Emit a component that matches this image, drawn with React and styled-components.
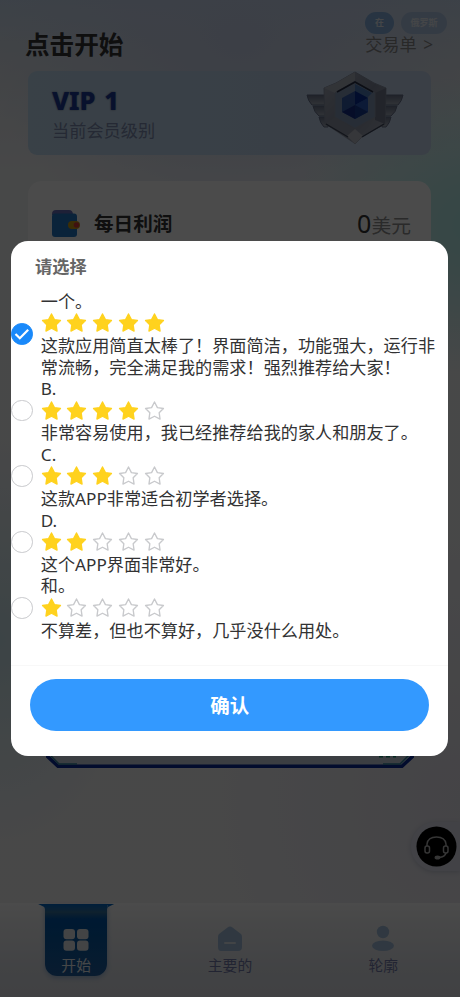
import React, { useState } from 'react';
import styled, { createGlobalStyle } from 'styled-components';

const GlobalStyle = createGlobalStyle`
  * {
    box-sizing: border-box;
  }
  body {
    margin: 0;
    font-family: 'Noto Sans', 'Noto Sans CJK SC', sans-serif;
  }
  h1, h2, p {
    margin: 0;
  }
  button {
    border: 0;
    padding: 0;
    background: none;
    font-family: inherit;
  }
`;

const Page = styled.div`
  position: relative;
  height: 997px;
  overflow: hidden;
  display: flex;
  flex-direction: column;
  background: radial-gradient(
      ellipse 190px 150px at 480px 225px,
      #b0eeea 0%,
      rgba(176, 238, 234, 0.75) 35%,
      rgba(176, 238, 234, 0) 100%
    ),
    radial-gradient(
      ellipse 260px 200px at 240px 40px,
      #c9d3ec 0%,
      rgba(201, 211, 236, 0) 100%
    ),
    radial-gradient(
      ellipse 130px 200px at 0 640px,
      #c9e3ea 0%,
      rgba(201, 227, 234, 0) 100%
    ),
    radial-gradient(
      ellipse 240px 260px at 460px 800px,
      #e5e3ec 0%,
      rgba(229, 227, 236, 0) 100%
    ),
    linear-gradient(#cadcf0 0, #dde3ea 60px, #eff0f2 170px, #f0f0f2 100%);
`;

const Languages = styled.div`
  position: absolute;
  top: 12px;
  right: 13px;
  display: flex;
  gap: 7px;
`;

const Language = styled.button`
  width: ${({ $active }) => ($active ? 29 : 46)}px;
  height: 22px;
  border-radius: 11px;
  background: ${({ $active }) => ($active ? '#86afdc' : '#b0c6e4')};
  color: #e4e9f0;
  font-size: 9px;
  font-weight: 600;
  line-height: 22px;
`;

const Header = styled.header`
  display: flex;
  align-items: center;
  justify-content: space-between;
  height: 71px;
  padding: 18px 27px 0 25px;

  h1 {
    color: #333;
    font-size: 24.6px;
    line-height: 36px;
  }
  p {
    margin-top: -2px;
    color: #888;
    font-size: 17.2px;
    word-spacing: 2px;
  }
`;

const VipCard = styled.section`
  display: flex;
  justify-content: space-between;
  height: 84px;
  margin: 0 29px 0 28px;
  padding-left: 24px;
  border-radius: 9px;
  background: linear-gradient(90deg, #c0d9ef, #c0d4ec 60%, #c3d2ea);

  h2 {
    height: 41px;
    padding-top: 11px;
    color: #1c3b98;
    font-size: 25.5px;
    font-weight: 800;
    line-height: 36px;
    word-spacing: 2px;
    text-shadow: 0 0 2px #5d6a82;
  }
  p {
    padding-top: 7px;
    color: #7c8bad;
    font-size: 17.2px;
    line-height: 24px;
  }
  svg {
    margin-right: 25px;
  }
`;

const ProfitCard = styled.section`
  display: flex;
  height: 500px;
  margin: 26px 29px 0 28px;
  padding: 29px 20px 0 24px;
  align-items: flex-start;
  border-radius: 14px;
  background: #fcfcfc;

  h2 {
    margin-left: 13px;
    color: #333;
    font-size: 19.6px;
    line-height: 28px;
  }
`;

const Amount = styled.p`
  margin-left: auto;
  margin-top: -5px;
  color: #333;
  font-size: 25px;
  line-height: 36px;

  span {
    color: #8c8c8c;
    font-size: 19.8px;
  }
`;

const Frame = styled.svg`
  display: block;
  margin: 59px auto 0 46px;
`;

const TabBar = styled.nav`
  display: grid;
  grid-template-columns: repeat(3, 1fr);
  align-items: start;
  height: 94px;
  margin-top: auto;
  background: linear-gradient(#fbfbfb, #eff0f1 20%, #dcdfe5 70%, #d8dae1);
`;

const Tab = styled.button`
  display: flex;
  flex-direction: column;
  align-items: center;
  padding-top: 21px;
  color: #737ba8;
  font-size: 14.8px;
  line-height: 20px;

  svg {
    margin-bottom: 1px;
  }
`;

const ActiveTab = styled(Tab)`
  position: relative;
  justify-self: center;
  width: 62px;
  height: 72px;
  margin: 1px 1px 0 0;
  padding-top: 20px;
  border-radius: 0 0 12px 12px;
  background: linear-gradient(
    #0067c4 0,
    #246da8 6px,
    #357099 8px,
    #0055a8 15px,
    #0858a0 50%,
    #205e9f 100%
  );
  box-shadow: 0 2px 5px #9ab4d3;
  color: #e8edf2;

  /* flared top edge */
  &::before {
    content: '';
    position: absolute;
    top: 0;
    left: -7px;
    width: 76px;
    height: 5px;
    background: #0067c4;
    clip-path: polygon(0 0, 100% 0, 92% 60%, 91% 100%, 91% 20%, 9% 20%, 9% 100%, 8% 60%);
  }
`;

const Support = styled.button`
  position: absolute;
  top: 822px;
  right: 0;
  width: 49px;
  height: 49px;
  padding: 4px 3px 4px 5px;
  border-radius: 25px 0 0 25px;
  background: #dcdeeb;
  box-shadow: 0 1px 5px #bfc2cf;
`;

const Overlay = styled.div`
  position: absolute;
  inset: 0;
  padding: 241px 12px 0 11px;
  background: rgba(0, 0, 0, 0.7);
`;

const Dialog = styled.div`
  height: 515px;
  border-radius: 17px;
  background: #fff;

  h2 {
    height: 49.8px;
    padding: 13px 24px 0;
    color: #666;
    font-size: 17.2px;
    line-height: 25px;
  }
`;

const Options = styled.div`
  height: 375px;
  border-bottom: 1px solid #f8f8f8;
`;

const Option = styled.label`
  display: flex;
  align-items: center;
  color: #323233;
  font-size: 17.15px;
  line-height: 21.4px;

  input {
    display: none;
  }
`;

const Radio = styled.span`
  flex: none;
  display: flex;
  align-items: center;
  justify-content: center;
  width: 21.5px;
  height: 21.5px;
  margin: -1px 8px 0 0.3px;
  border: 1px solid ${({ $checked }) => ($checked ? '#1989fa' : '#c8c9cc')};
  border-radius: 50%;
  background: ${({ $checked }) => ($checked ? '#1989fa' : '#fff')};
`;

const Stars = styled.div`
  display: flex;
  align-items: center;
  gap: 4.3px;
  height: 23px;
  padding-bottom: 1.4px;
`;

const Confirm = styled.button`
  display: block;
  width: 399px;
  height: 51.5px;
  margin: 13.7px 0 0 19.3px;
  padding-bottom: 2px;
  border-radius: 26px;
  background: #39f;
  color: #fff;
  font-size: 19.5px;
  font-weight: 700;
`;

const options = [
  {
    label: '一个。',
    stars: 5,
    text: '这款应用简直太棒了！界面简洁，功能强大，运行非常流畅，完全满足我的需求！强烈推荐给大家！',
  },
  { label: 'B.', stars: 4, text: '非常容易使用，我已经推荐给我的家人和朋友了。' },
  { label: 'C.', stars: 3, text: '这款APP非常适合初学者选择。' },
  { label: 'D.', stars: 2, text: '这个APP界面非常好。' },
  { label: '和。', stars: 1, text: '不算差，但也不算好，几乎没什么用处。' },
];

const Star = ({ filled }) => (
  <svg width='21.4' height='21.4' viewBox='0 0 22 22'>
    <path
      d='M10.8 2 13.8 7.8 20 8.7 15.6 13.1 16.5 19.6 10.8 16.7 5.1 19.6 6 13.1 1.6 8.7 7.8 7.8Z'
      fill={filled ? '#ffd21e' : '#fff'}
      stroke={filled ? '#ffd21e' : '#c8c9cc'}
      strokeWidth='1.4'
      strokeLinejoin='round'
    />
  </svg>
);

const Badge = () => (
  <svg width='102' height='80' viewBox='0 0 102 80'>
    <defs>
      <linearGradient id='metal' x1='0' y1='0' x2='1' y2='1'>
        <stop offset='0' stopColor='#a5aab8' />
        <stop offset='0.5' stopColor='#81889b' />
        <stop offset='1' stopColor='#a6abb9' />
      </linearGradient>
      <linearGradient id='wing' x1='0' y1='0' x2='0' y2='1'>
        <stop offset='0' stopColor='#697389' />
        <stop offset='1' stopColor='#a5acba' />
      </linearGradient>
    </defs>
    <g fill='url(#wing)' stroke='#66708a' strokeWidth='1'>
      <path d='M3 24H23V34H8Q4 30 3 24Z' />
      <path d='M9 35H23V45H15Q10 41 9 35Z' />
      <path d='M15 46H24V56H20Q16 52 15 46Z' />
      <path d='M99 24H79V34H94Q98 30 99 24Z' />
      <path d='M93 35H79V45H87Q92 41 93 35Z' />
      <path d='M87 46H78V56H82Q86 52 87 46Z' />
    </g>
    <path
      d='M51 1 70 12 82 17 81 53 59 65 51 73 43 65 21 53 20 17 32 12Z'
      fill='url(#metal)'
      stroke='#8790a2'
    />
    <path d='M51 1V11L31 22 20 17 32 12Z' fill='#a8adba' />
    <path d='M82 17 71 22V49L81 53Z' fill='#747b8e' />
    <path d='M51 58V73L21 53 31 46Z' fill='#8e94a3' />
    <path d='M51 58 43 65 51 73 59 65Z' fill='#b4b8c1' />
    <path d='M51 10 71 22V46L51 57 31 46V22Z' fill='#8498b6' stroke='#8c96aa' />
    <path d='M33 21 51 11 69 21' fill='none' stroke='#272e43' strokeWidth='1.7' />
    <path d='M22 53 44 66M58 66 80 53' stroke='#3d465b' strokeWidth='1.4' />
    <path d='M51 13 68 22 63 27 51 20Z' fill='#4d78b5' />
    <path d='M51 20 64 27V41L51 48 38 41V27Z' fill='#375da8' />
    <path d='M51 20 64 27 51 34Z' fill='#072d98' />
    <path d='M51 34 38 41V27Z' fill='#345ca6' />
    <path d='M64 27V41L51 34Z' fill='#2857b9' />
    <path d='M51 34V48L38 41Z' fill='#172d85' />
    <path d='M51 34 64 41 51 48Z' fill='#17398f' />
  </svg>
);

const Wallet = () => (
  <svg width='29' height='28' viewBox='0 0 29 28'>
    <path d='M0 4Q0 0 4 0H17Q21 0 21 5H0Z' fill='#656db7' />
    <rect y='3.5' width='25' height='23.5' rx='3' fill='#2476c2' />
    <rect x='16' y='11' width='12' height='8' rx='4' fill='#c99b13' />
    <circle cx='24.5' cy='15' r='2.8' fill='#d83a38' />
  </svg>
);

const App = () => {
  const [selected, setSelected] = useState(0);

  return (
    <>
      <GlobalStyle />
      <Page>
        <Languages>
          <Language $active>在</Language>
          <Language>俄罗斯</Language>
        </Languages>
        <Header>
          <h1>点击开始</h1>
          <p>交易单 &gt;</p>
        </Header>
        <VipCard>
          <div>
            <h2>VIP 1</h2>
            <p>当前会员级别</p>
          </div>
          <Badge />
        </VipCard>
        <ProfitCard>
          <Wallet />
          <h2>每日利润</h2>
          <Amount>
            0<span>美元</span>
          </Amount>
        </ProfitCard>
        <Frame width='368' height='29' viewBox='0 0 368 29'>
          <path d='M0 15 12 27H356L368 15V0H0Z' fill='#c5d0dc' />
          <path d='M0 15 12 26.3H356L368 15' fill='none' stroke='#092a98' strokeWidth='3.5' />
          <path d='M5 16 13 24H31M337 24H354L364 14' fill='none' stroke='#32819b' strokeWidth='1.5' />
          <path d='M333 16.5H350' stroke='#14856f' strokeWidth='2' strokeDasharray='4 3' />
        </Frame>
        <TabBar>
          <ActiveTab>
            <svg width='26' height='30' viewBox='0 0 26 30' fill='#e0e3e6'>
              <rect x='0.5' y='5' width='11.5' height='10.3' rx='3' />
              <rect x='14' y='5' width='11.5' height='10.3' rx='3' />
              <rect x='0.5' y='16.5' width='11.5' height='10.3' rx='3' />
              <rect x='14' y='16.5' width='11.5' height='10.3' rx='3' />
            </svg>
            开始
          </ActiveTab>
          <Tab>
            <svg width='26' height='30' viewBox='0 0 26 30'>
              <path
                d='M2 10 10.5 3.5Q13 1.5 15.5 3.5L24 10Q25 11 25 13V23Q25 27 21 27H4Q1 27 1 23V13Q1 11 2 10Z'
                fill='#a1bdd9'
              />
              <path d='M8 19H18' stroke='#dce3eb' strokeWidth='2' strokeLinecap='round' />
            </svg>
            主要的
          </Tab>
          <Tab>
            <svg width='26' height='30' viewBox='0 0 26 30' fill='#a1bdd9'>
              <circle cx='13' cy='8' r='6.2' />
              <ellipse cx='13' cy='21.7' rx='11' ry='5.2' />
            </svg>
            轮廓
          </Tab>
        </TabBar>
        <Support>
          <svg width='41' height='41' viewBox='0 0 41 41' fill='none' stroke='#b5b5b5' strokeWidth='1.5'>
            <circle cx='20.5' cy='20.5' r='20' fill='#000' stroke='none' />
            <path d='M11 20V18Q12 11 20.5 11T30 18V20' />
            <rect x='9' y='20' width='4.5' height='7' rx='2' />
            <rect x='27.5' y='20' width='4.5' height='7' rx='2' />
            <path d='M30 27Q29 31 23 31.5' />
            <ellipse cx='21.5' cy='31.5' rx='2.2' ry='1.3' fill='#b5b5b5' />
          </svg>
        </Support>
        <Overlay>
          <Dialog>
            <h2>请选择</h2>
            <Options>
              {options.map((option, i) => (
                <Option key={option.label}>
                  <input
                    type='radio'
                    name='review'
                    checked={selected === i}
                    onChange={() => setSelected(i)}
                  />
                  <Radio $checked={selected === i}>
                    {selected === i && (
                      <svg width='16' height='14' viewBox='0 0 16 14'>
                        <path d='M1.5 7 5.8 11.2 14.2 2.8' fill='none' stroke='#fff' strokeWidth='2.2' />
                      </svg>
                    )}
                  </Radio>
                  <div>
                    <p>{option.label}</p>
                    <Stars>
                      {[1, 2, 3, 4, 5].map((n) => (
                        <Star key={n} filled={n <= option.stars} />
                      ))}
                    </Stars>
                    <p>{option.text}</p>
                  </div>
                </Option>
              ))}
            </Options>
            <Confirm>确认</Confirm>
          </Dialog>
        </Overlay>
      </Page>
    </>
  );
};

export default App;
